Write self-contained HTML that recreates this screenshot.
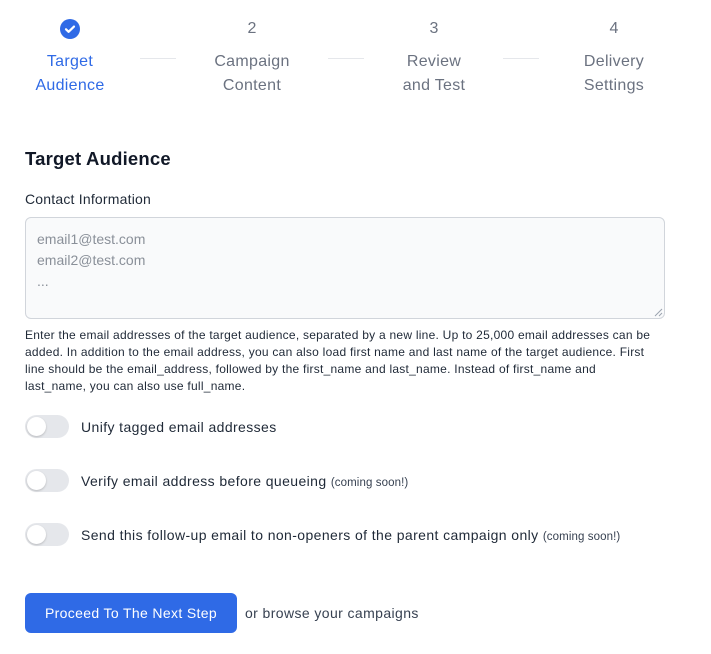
<!DOCTYPE html>
<html><head><style>
*{margin:0;padding:0;box-sizing:border-box}
body{width:711px;height:654px;background:#fff;font-family:"Liberation Sans",sans-serif;position:relative;overflow:hidden;color:#1f2937}
.a{position:absolute}
.step{position:absolute;text-align:center;font-size:16px;line-height:24px;color:#6b7280;width:140px;letter-spacing:0.3px}
.num{position:absolute;font-size:16px;color:#6b7280;width:140px;text-align:center;top:20px}
.ln{position:absolute;top:58px;height:1px;background:#e5e7eb;width:36px}
.tg{position:absolute;left:25px;width:44px;height:23px;border-radius:12px;background:#e5e7eb}
.tg:after{content:"";position:absolute;left:2px;top:2px;width:19px;height:19px;border-radius:50%;background:#fff;box-shadow:0 1px 2px rgba(0,0,0,.2)}
.tl{position:absolute;left:81px;font-size:14px;color:#1f2937;letter-spacing:0.4px}
.tl small{font-size:11.5px;color:#374151;letter-spacing:0.1px}
</style></head><body>
<svg class="a" style="left:60px;top:19px" width="20" height="20" viewBox="0 0 20 20"><circle cx="10" cy="10" r="10" fill="#2f6ae6"/><path d="M6 10.3l2.6 2.5L14 7.6" stroke="#fff" stroke-width="2.2" fill="none" stroke-linecap="round" stroke-linejoin="round"/></svg>
<div class="step" style="left:0;top:50px;color:#2f6ae6">Target<br>Audience</div>
<div class="num" style="left:182px">2</div>
<div class="step" style="left:182px;top:50px">Campaign<br>Content</div>
<div class="num" style="left:364px">3</div>
<div class="step" style="left:364px;top:50px">Review<br>and Test</div>
<div class="num" style="left:544px">4</div>
<div class="step" style="left:544px;top:50px">Delivery<br>Settings</div>
<div class="ln" style="left:140px"></div>
<div class="ln" style="left:328px"></div>
<div class="ln" style="left:503px"></div>
<div class="a" style="left:25px;top:148px;font-size:18.5px;font-weight:bold;color:#111827;letter-spacing:0.2px">Target Audience</div>
<div class="a" style="left:25px;top:191px;font-size:14px;color:#1f2937;letter-spacing:0.2px">Contact Information</div>
<div class="a" style="left:25px;top:217px;width:640px;height:102px;border:1px solid #d1d5db;border-radius:6px;background:#f9fafb;padding:11px 11px;font-size:14px;line-height:21px;color:#8a9099">email1@test.com<br>email2@test.com<br>...</div>
<svg class="a" style="left:654px;top:308px" width="9" height="9"><path d="M1 8L8 1M5 8L8 5" stroke="#9ca3af"/></svg>
<div class="a" style="left:25px;top:327px;width:680px;font-size:12px;line-height:17px;color:#1f2937;letter-spacing:0.25px;white-space:nowrap">Enter the email addresses of the target audience, separated by a new line. Up to 25,000 email addresses can be<br>added. In addition to the email address, you can also load first name and last name of the target audience. First<br>line should be the email_address, followed by the first_name and last_name. Instead of first_name and<br>last_name, you can also use full_name.</div>
<div class="tg" style="top:415px"></div><div class="tl" style="top:419px">Unify tagged email addresses</div>
<div class="tg" style="top:469px"></div><div class="tl" style="top:473px">Verify email address before queueing <small>(coming soon!)</small></div>
<div class="tg" style="top:523px"></div><div class="tl" style="top:527px">Send this follow-up email to non-openers of the parent campaign only <small>(coming soon!)</small></div>
<div class="a" style="left:25px;top:593px;width:212px;height:40px;border-radius:6px;background:#2f6ae6;color:#fff;font-size:14px;line-height:40px;text-align:center;letter-spacing:0.35px">Proceed To The Next Step</div>
<div class="a" style="left:245px;top:605px;font-size:14px;color:#374151;letter-spacing:0.4px">or browse your campaigns</div>
</body></html>
